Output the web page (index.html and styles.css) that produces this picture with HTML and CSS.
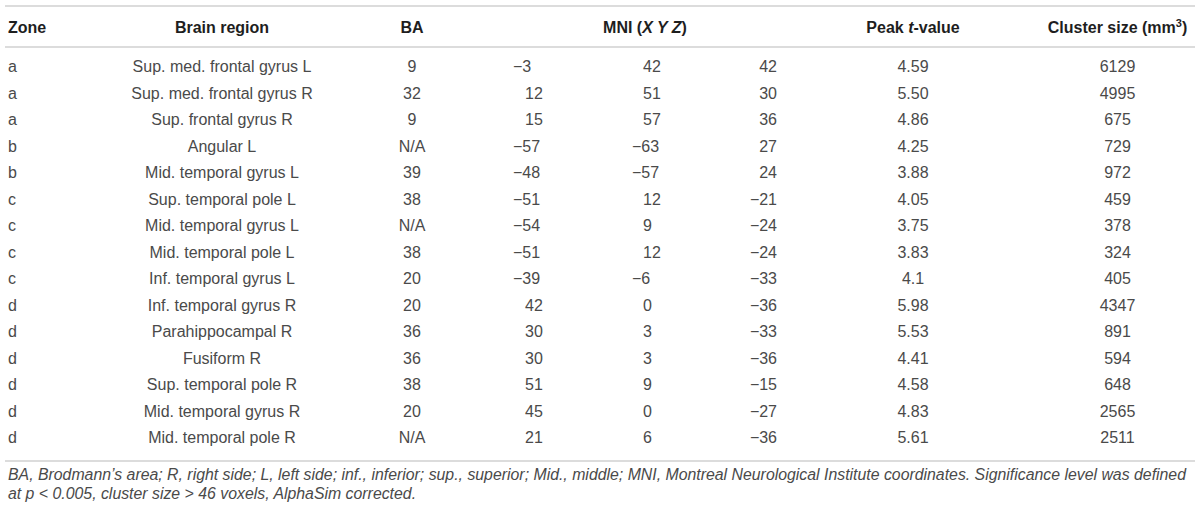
FILE: index.html
```html
<!DOCTYPE html>
<html lang="en">
<head>
<meta charset="utf-8">
<title>Table</title>
<link rel="stylesheet" href="styles.css">
</head>
<body>
<div class="wrap">
<table class="tbl">
<colgroup>
<col class="c-zone"><col class="c-region"><col class="c-ba"><col class="c-x"><col class="c-y"><col class="c-z"><col class="c-peak"><col class="c-cluster">
</colgroup>
<thead>
<tr>
<th class="zone">Zone</th>
<th class="ctr">Brain region</th>
<th class="ctr">BA</th>
<th class="ctr" colspan="3">MNI (<i>X Y Z</i>)</th>
<th class="ctr">Peak <i>t</i>-value</th>
<th class="ctr cl">Cluster size (mm<sup>3</sup>)</th>
</tr>
</thead>
<tbody>
<tr><td class="zone">a</td><td class="ctr">Sup. med. frontal gyrus L</td><td class="ctr">9</td><td class="x">−3</td><td class="y pos">42</td><td class="z">42</td><td class="ctr">4.59</td><td class="ctr cl">6129</td></tr>
<tr><td class="zone">a</td><td class="ctr">Sup. med. frontal gyrus R</td><td class="ctr">32</td><td class="x pos">12</td><td class="y pos">51</td><td class="z">30</td><td class="ctr">5.50</td><td class="ctr cl">4995</td></tr>
<tr><td class="zone">a</td><td class="ctr">Sup. frontal gyrus R</td><td class="ctr">9</td><td class="x pos">15</td><td class="y pos">57</td><td class="z">36</td><td class="ctr">4.86</td><td class="ctr cl">675</td></tr>
<tr><td class="zone">b</td><td class="ctr">Angular L</td><td class="ctr">N/A</td><td class="x">−57</td><td class="y">−63</td><td class="z">27</td><td class="ctr">4.25</td><td class="ctr cl">729</td></tr>
<tr><td class="zone">b</td><td class="ctr">Mid. temporal gyrus L</td><td class="ctr">39</td><td class="x">−48</td><td class="y">−57</td><td class="z">24</td><td class="ctr">3.88</td><td class="ctr cl">972</td></tr>
<tr><td class="zone">c</td><td class="ctr">Sup. temporal pole L</td><td class="ctr">38</td><td class="x">−51</td><td class="y pos">12</td><td class="z">−21</td><td class="ctr">4.05</td><td class="ctr cl">459</td></tr>
<tr><td class="zone">c</td><td class="ctr">Mid. temporal gyrus L</td><td class="ctr">N/A</td><td class="x">−54</td><td class="y pos">9</td><td class="z">−24</td><td class="ctr">3.75</td><td class="ctr cl">378</td></tr>
<tr><td class="zone">c</td><td class="ctr">Mid. temporal pole L</td><td class="ctr">38</td><td class="x">−51</td><td class="y pos">12</td><td class="z">−24</td><td class="ctr">3.83</td><td class="ctr cl">324</td></tr>
<tr><td class="zone">c</td><td class="ctr">Inf. temporal gyrus L</td><td class="ctr">20</td><td class="x">−39</td><td class="y">−6</td><td class="z">−33</td><td class="ctr">4.1</td><td class="ctr cl">405</td></tr>
<tr><td class="zone">d</td><td class="ctr">Inf. temporal gyrus R</td><td class="ctr">20</td><td class="x pos">42</td><td class="y pos">0</td><td class="z">−36</td><td class="ctr">5.98</td><td class="ctr cl">4347</td></tr>
<tr><td class="zone">d</td><td class="ctr">Parahippocampal R</td><td class="ctr">36</td><td class="x pos">30</td><td class="y pos">3</td><td class="z">−33</td><td class="ctr">5.53</td><td class="ctr cl">891</td></tr>
<tr><td class="zone">d</td><td class="ctr">Fusiform R</td><td class="ctr">36</td><td class="x pos">30</td><td class="y pos">3</td><td class="z">−36</td><td class="ctr">4.41</td><td class="ctr cl">594</td></tr>
<tr><td class="zone">d</td><td class="ctr">Sup. temporal pole R</td><td class="ctr">38</td><td class="x pos">51</td><td class="y pos">9</td><td class="z">−15</td><td class="ctr">4.58</td><td class="ctr cl">648</td></tr>
<tr><td class="zone">d</td><td class="ctr">Mid. temporal gyrus R</td><td class="ctr">20</td><td class="x pos">45</td><td class="y pos">0</td><td class="z">−27</td><td class="ctr">4.83</td><td class="ctr cl">2565</td></tr>
<tr><td class="zone">d</td><td class="ctr">Mid. temporal pole R</td><td class="ctr">N/A</td><td class="x pos">21</td><td class="y pos">6</td><td class="z">−36</td><td class="ctr">5.61</td><td class="ctr cl">2511</td></tr>
</tbody>
</table>
<p class="note">BA, Brodmann’s area; R, right side; L, left side; inf., inferior; sup., superior; Mid., middle; MNI, Montreal Neurological Institute coordinates. Significance level was defined at p &lt; 0.005, cluster size &gt; 46 voxels, AlphaSim corrected.</p>
</div>
</body>
</html>
```

FILE: styles.css
```css
html, body {
  margin: 0;
  padding: 0;
  background: #ffffff;
}

body {
  font-family: "Liberation Sans", Arial, sans-serif;
  color: #4a4a4a;
}

.wrap {
  padding: 5px 5px 0 5px;
}

.tbl {
  width: 1190px;
  border-collapse: collapse;
  table-layout: fixed;
  font-size: 16px;
}

.c-zone { width: 95px; }
.c-region { width: 244px; }
.c-ba { width: 136px; }
.c-x { width: 120px; }
.c-y { width: 110px; }
.c-z { width: 100px; }
.c-peak { width: 206px; }
.c-cluster { width: 179px; }

.tbl thead tr {
  border-top: 2px solid #dcdcdc;
  border-bottom: 2px solid #dcdcdc;
}

.tbl th {
  height: 37px;
  padding: 2px 0 0 0;
  font-weight: bold;
  color: #1e1e1e;
  vertical-align: middle;
  white-space: nowrap;
}

.tbl th i {
  font-style: italic;
}

.tbl sup {
  font-size: 11px;
  line-height: 0;
  vertical-align: 6px;
}

.tbl td {
  height: 26.5px;
  padding: 0;
  line-height: 18px;
  vertical-align: middle;
  white-space: nowrap;
}

.tbl tbody tr:first-child td {
  padding-top: 6px;
}

.tbl tbody tr:last-child td {
  padding-bottom: 8px;
}

.tbl tbody tr:last-child {
  border-bottom: 2px solid #dcdcdc;
}

.zone {
  text-align: left;
  padding-left: 3px !important;
}

.ctr {
  text-align: center;
}

.cl {
  padding-left: 24px !important;
}

.x {
  text-align: left;
  padding-left: 33px !important;
}

.y {
  text-align: left;
  padding-left: 32px !important;
}

.x.pos {
  padding-left: 45px !important;
}

.y.pos {
  padding-left: 43px !important;
}

.z {
  text-align: right;
  padding-right: 33px !important;
}

.note {
  margin: 3px 0 0 3px;
  width: 1188px;
  font-size: 15.85px;
  line-height: 19px;
  font-style: italic;
  color: #4a4a4a;
}
```
